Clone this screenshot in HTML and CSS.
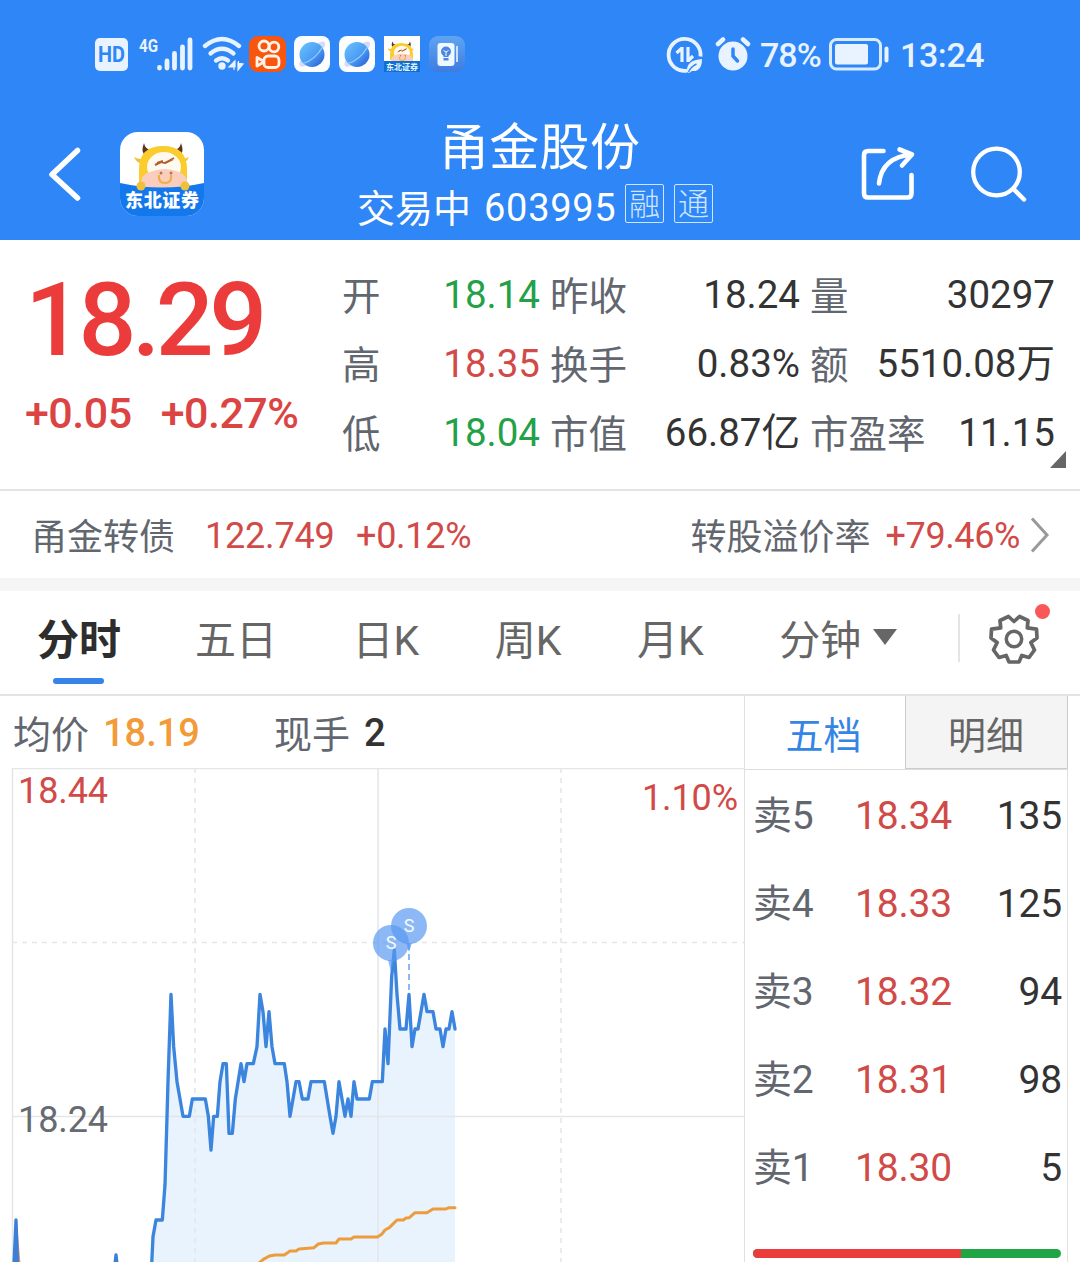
FILE: index.html
```html
<!DOCTYPE html>
<html lang="zh-CN">
<head>
<meta charset="utf-8">
<title>甬金股份 603995</title>
<link rel="stylesheet" href="styles.css">
</head>
<body>
<svg class="defs" width="0" height="0">
  <defs>
    <linearGradient id="planet" x1="0" y1="0" x2="1" y2="1"><stop offset="0" stop-color="#6fc3fb"/><stop offset=".55" stop-color="#4a9df5"/><stop offset="1" stop-color="#2453d0"/></linearGradient>
    <linearGradient id="tile" x1="0" y1="0" x2="0" y2="1"><stop offset="0" stop-color="#5fa4f3"/><stop offset="1" stop-color="#3f7be0"/></linearGradient>
    <symbol id="browser" viewBox="0 0 36 36">
      <rect width="36" height="36" rx="8" fill="#fbfdff"/>
      <path d="M24 7q6-3 7 0t-4 8zM8 22q-4 6-2 8t9-2z" fill="#d5daf6"/>
      <circle cx="18" cy="18.500" r="12.500" fill="url(#planet)"/>
      <path d="M9 27.500Q21 24 28.500 11" fill="none" stroke="#9bcbf8" stroke-width="1.300"/>
    </symbol>
    <symbol id="bull" viewBox="0 0 84 62">
      <path d="M14 25q7 4 13 0l-3 7q-7 0-10-7zM69 25q-7 4-13 0l3 7q7 0 10-7z" fill="#f3bd35"/>
      <path d="M24 11q-3 8 0 11l7-4q-6-1-7-7zM61 11q3 8 0 11l-7-4q6-1 7-7z" fill="#5b3426"/>
      <path d="M19 50V36Q20 14 43 14T67 36v14z" fill="#fccb2c"/>
      <ellipse cx="44" cy="35" rx="17" ry="15" fill="#fffaf0"/>
      <path d="M35 33l6-3 4 1 9-5M37 31l6-2M45 31l8-4" fill="none" stroke="#b35e2e" stroke-width="2"/>
      <path d="M22 53q-3-10 8-13 14-6 29 0 10 4 8 13l-8 3H30z" fill="#fbcdbd"/>
      <path d="M39 43q-1 8 6 8t6-8" fill="none" stroke="#efb044" stroke-width="2.200"/>
      <circle cx="41" cy="41" r="1.500" fill="#b9755b"/><circle cx="51" cy="41" r="1.500" fill="#b9755b"/>
    </symbol>
  </defs>
</svg>

<header class="top">
  <div class="status">
    <div class="status-left">
      <svg class="hd" width="33" height="33" viewBox="0 0 33 33"><rect width="33" height="33" rx="5" fill="#e9f3ff"/><text x="16.500" y="24" text-anchor="middle" textLength="27" lengthAdjust="spacingAndGlyphs" class="hd-text">HD</text></svg>
      <svg class="signal" width="58" height="40" viewBox="-2 -4 58 40"><text x="0" y="15.500" class="net-text" textLength="19" lengthAdjust="spacingAndGlyphs">4G</text><path d="M20.500 31.500v.5M28 25v7M35.500 17.500V32M43.500 11v21M51 4v28" stroke="#e9f3ff" stroke-width="4.800" stroke-linecap="round"/></svg>
      <svg class="wifi" width="42" height="36" viewBox="0 0 42 36"><g fill="none" stroke="#e9f3ff" stroke-width="4.300" stroke-linecap="round"><path d="M3 10Q20-4 37 10"/><path d="M8.500 17.500Q20 8 31.500 17.500"/><path d="M14 24.500q6-4.500 12 0"/></g><circle cx="20" cy="30" r="3.700" fill="#e9f3ff"/><path d="M32 25v9M27 31h6v-6zM36.500 34v-9M36 34v-7l5 1z" fill="#e9f3ff" stroke="#e9f3ff" stroke-width="1.200"/></svg>
      <svg class="app-a" width="37" height="36" viewBox="0 0 37 36"><rect width="37" height="36" rx="9" fill="#f8560f"/><g fill="none" stroke="#fff3e8" stroke-width="2.800"><circle cx="15" cy="10" r="5"/><circle cx="25" cy="11" r="4.800"/><rect x="15" y="20" width="15" height="11.500" rx="4"/><path d="M14 25l-6-3.500v8.500l6-3.500z" stroke-linejoin="round"/></g></svg>
      <svg class="app-b" width="36" height="36"><use href="#browser"/></svg>
      <svg class="app-b" width="36" height="36"><use href="#browser"/></svg>
      <svg class="app-b" width="36" height="36" viewBox="0 0 36 36"><path d="M0 0h36v36H0z" fill="#fdfefe"/><use href="#bull" x="-3" y="0" width="40" height="30"/><path d="M0 25h36v11H0z" fill="#0d70d3"/><text x="2" y="34" class="mini-text" textLength="32">东北证券</text></svg>
      <svg class="app-b" width="36" height="36" viewBox="0 0 36 36"><rect width="36" height="36" rx="9" fill="url(#tile)"/><rect x="8.500" y="7" width="17" height="23" rx="3" fill="#eff8ff"/><path d="M28 10v16" stroke="#c5e2ff" stroke-width="2"/><circle cx="17" cy="15.500" r="5" fill="#4b87df"/><path d="M14.500 19h5v5.500h-5z" fill="#4b87df"/><path d="M14.500 14.500l2.500 1.500 2.500-1.500M17 16v4M14 21.500h6" fill="none" stroke="#eff8ff"/></svg>
    </div>
    <div class="status-right">
      <svg width="38" height="38" viewBox="0 0 38 38"><g fill="none" stroke="#e9f3ff"><path d="M21 34.700A16 16 0 1 1 34.500 20.500" stroke-width="3.800"/><path d="M16 11v15M10.500 17l5.500-5M22 11v15M22 25l5-5" stroke-width="3.200"/></g><path d="M21 36q-1-12 15-13 0 13-10 12l-3 2z" fill="#e9f3ff"/><path d="M22.500 36q2-5 8-8" stroke="#2f86f6" stroke-width="1.400" fill="none"/></svg>
      <svg class="alarm" width="36" height="36" viewBox="0 0 36 36"><circle cx="18" cy="20" r="14.500" fill="#e9f3ff"/><path d="M3 8l5-4.500M33 8l-5-4.500" stroke="#e9f3ff" stroke-width="4.500" stroke-linecap="round"/><path d="M18 13v7l4.500 5" fill="none" stroke="#2f86f6" stroke-width="3.500" stroke-linecap="round"/></svg>
      <span class="battery-text">78%</span>
      <svg class="battery" width="60" height="33" viewBox="0 0 60 33"><rect x="1.500" y="1.500" width="50" height="29.500" rx="6" fill="none" stroke="#d8ebff" stroke-width="3"/><rect x="6" y="6" width="33" height="20.500" rx="2" fill="#e9f3ff"/><rect x="55.500" y="8.500" width="4" height="16" rx="2" fill="#e9f3ff"/></svg>
      <span class="clock">13:24</span>
    </div>
  </div>
  <div class="nav">
    <svg class="back" width="34" height="56" viewBox="0 0 34 56"><path d="M29.500 4.500L4 28.500l25.500 23.500" fill="none" stroke="#fff" stroke-width="5.500" stroke-linecap="round" stroke-linejoin="round"/></svg>
    <svg class="broker" width="84" height="84" viewBox="0 0 84 84"><clipPath id="round"><rect width="84" height="84" rx="18"/></clipPath><g clip-path="url(#round)"><path d="M0 0h84v84H0z" fill="#fff"/><use href="#bull" width="84" height="62"/><path d="M0 51q42 9 84 0v33H0z" fill="#1478ed"/><circle cx="21" cy="54" r="4.500" fill="#eec03b"/><circle cx="65" cy="54" r="4.500" fill="#eec03b"/><text x="5" y="75" class="broker-text" textLength="74">东北证券</text></g></svg>
    <div class="title">
      <h1>甬金股份</h1>
      <div class="subtitle"><span class="state">交易中</span><span class="code">603995</span><span class="tag">融</span><span class="tag">通</span></div>
    </div>
    <svg class="share" width="56" height="56" viewBox="0 0 56 56"><path d="M23.500 5H8Q4 5 4 9v38.500q0 4 4 4h39.500q4 0 4-4V29" fill="none" stroke="#fff" stroke-width="4.600" stroke-linecap="round"/><path d="M19 37.500Q22 11 52 8.500M39.500 3.500l12.500 5-10 11" fill="none" stroke="#fff" stroke-width="4.600" stroke-linecap="round" stroke-linejoin="round"/></svg>
    <svg class="search" width="58" height="56" viewBox="0 0 58 56"><circle cx="26.500" cy="26" r="23.300" fill="none" stroke="#fff" stroke-width="4.300"/><path d="M43.500 43l10.500 10.500" stroke="#fff" stroke-width="4.500" stroke-linecap="round"/></svg>
  </div>
</header>

<section class="quote">
  <div class="price">
    <div class="last">18.29</div>
    <div class="change"><span>+0.05</span><span>+0.27%</span></div>
  </div>
  <dl class="stats">
    <div><dt>开</dt><dd class="green">18.14</dd></div><div><dt>昨收</dt><dd>18.24</dd></div><div><dt>量</dt><dd>30297</dd></div>
    <div><dt>高</dt><dd class="red">18.35</dd></div><div><dt>换手</dt><dd>0.83%</dd></div><div><dt>额</dt><dd>5510.08万</dd></div>
    <div><dt>低</dt><dd class="green">18.04</dd></div><div><dt>市值</dt><dd>66.87亿</dd></div><div><dt>市盈率</dt><dd>11.15</dd></div>
  </dl>
  <svg class="expand" width="16" height="17"><path d="M16 0v17H0z" fill="#666"/></svg>
</section>

<section class="bond">
  <span class="bond-name">甬金转债</span><span class="bond-price">122.749</span><span class="bond-pct">+0.12%</span>
  <span class="premium">转股溢价率</span><span class="premium-pct">+79.46%</span>
  <svg class="chevron" width="20" height="36" viewBox="0 0 20 36"><path d="M2 1.500l15 16.500L2 34.500" fill="none" stroke="#999" stroke-width="3"/></svg>
</section>

<nav class="tabs">
  <span class="tab active">分时</span><span class="tab">五日</span><span class="tab">日K</span><span class="tab">周K</span><span class="tab">月K</span><span class="tab minute">分钟<svg width="24" height="16"><path d="M0 0h24L12 16z" fill="#666"/></svg></span>
  <div class="settings">
    <svg width="52" height="52" viewBox="-26 -26 52 52"><path fill="none" stroke="#666" stroke-width="3.700" stroke-linejoin="round" d="M-5.500-22.500L0-17.500 5.500-22.500 14-18.500 13.300-11.200 22.500-9.800 23-1 16.800 3.500 20.500 11 15 18.500 7.800 16.500 5 23H-5L-7.800 16.500-15 18.500-20.500 11-16.800 3.500-23-1-22.500-9.800-13.300-11.200-14-18.500z"/><circle r="7.700" fill="none" stroke="#666" stroke-width="3.500"/></svg>
    <i class="dot"></i>
  </div>
</nav>

<main class="market">
  <section class="chart">
    <div class="legend"><span class="label">均价</span><b class="avg">18.19</b><span class="label hand">现手</span><b>2</b></div>
    <svg class="plot" width="744" height="494" viewBox="0 768 744 494">
      <path d="M151.500 1262L153 1237 156 1220H162L165 1185 168 1082 171 994 177 1082 183 1116H189L192 1099H205L211 1150 214 1116H217L223 1064H226L229 1133H232L241 1064H254L260 994 275 1064H284L290 1116 296 1082 302 1099 311 1082H324L333 1133 339 1082 345 1116 354 1082 357 1099H369L372 1082H382L385 1029 388 1064 394 945 400 1029H406L409 994 412 1047 424 994 433 1012 443 1047 452 1012 455 1029V1262z" fill="#e8f3fe"/>
      <g fill="none" stroke="#e3e5e8" stroke-width="1.500">
        <path d="M12.500 1262V768.500H744M378 768v494M12 1116.500H744"/>
        <path d="M195 768v494M561 768v494M12 942.500H744" stroke-dasharray="5 5"/>
      </g>
      <g fill="none" stroke-linejoin="round" stroke-linecap="round">
        <path d="M16 1228l3 36" stroke="#dd9470" stroke-width="3"/>
        <path d="M14 1264l2-44 1.500 44M115 1264l1-9 1 9" stroke="#3d7fd6" stroke-width="3.300"/>
        <path transform="translate(130 890) scale(.33333)" stroke="#3b85de" stroke-width="10" d="M65 1125L69 1040 78 990 97 990 105 885 111 680 114 575 123 313 131 470 141 575 150 627 159 679 178 679 187 627 226 627 235 679 243 780 251 679 262 679 270 575 279 521 289 521 297 730 307 730 316 627 333 521 342 575 351 521 370 521 381 470 390 313 399 365 408 470 417 365 426 470 435 521 463 521 471 575 480 679 498 575 507 575 517 627 534 627 543 575 583 575 600 679 609 730 618 679 627 575 645 679 654 627 663 679 672 575 681 627 718 627 727 575 757 575 765 417 774 521 785 260 793 180 801 313 810 417 828 417 837 313 846 470 855 417 864 417 873 365 882 313 891 365 909 365 918 417 930 417 939 470 948 417 957 417 966 365 975 417"/>
        <path transform="translate(130 890) scale(.33333)" stroke="#ed9c3c" stroke-width="9" d="M380 1125L400 1108 418 1098 435 1095 463 1095 480 1083 498 1083 507 1077 552 1073 565 1062 580 1059 618 1059 627 1047 663 1047 672 1041 742 1041 755 1033 765 1020 778 1013 790 1001 801 990 820 990 828 984 838 983 855 968 891 968 909 957 948 957 957 953 975 953"/>
      </g>
      <path d="M409 944v48" stroke="#8db9f2" stroke-width="2" stroke-dasharray="6 4"/>
      <g fill="#5698f1" fill-opacity=".68"><path d="M406 943h6l-3 9zM388 960h6l-3 12z"/><circle cx="409" cy="926" r="18"/><circle cx="391" cy="943" r="18"/></g>
      <g class="marker"><text x="409" y="932">S</text><text x="391" y="949">S</text></g>
      <g class="axis"><text x="18" y="803" class="up" textLength="90">18.44</text><text x="642" y="810" class="up" textLength="96">1.10%</text><text x="18" y="1132" textLength="90">18.24</text></g>
    </svg>
  </section>
  <aside class="book">
    <div class="book-tabs"><span class="on">五档</span><span class="off">明细</span></div>
    <div class="row"><span>卖5</span><span class="red">18.34</span><span class="vol">135</span></div>
    <div class="row"><span>卖4</span><span class="red">18.33</span><span class="vol">125</span></div>
    <div class="row"><span>卖3</span><span class="red">18.32</span><span class="vol">94</span></div>
    <div class="row"><span>卖2</span><span class="red">18.31</span><span class="vol">98</span></div>
    <div class="row"><span>卖1</span><span class="red">18.30</span><span class="vol">5</span></div>
    <div class="ratio"><i></i></div>
  </aside>
</main>
</body>
</html>
```
FILE: styles.css
```css
* { box-sizing: border-box; }
body { margin: 0; width: 1080px; height: 1262px; overflow: hidden; background: #fff; color: #333; font-family: Roboto, "Noto Sans CJK SC", sans-serif; }
svg { display: block; flex: none; }
.defs { position: absolute; }
span, dt, dd, b { white-space: nowrap; }
.red { color: #d14a48; }
.green { color: #24a148; }

.top { height: 240px; background: #2f86f6; color: #fff; }
.status { height: 110px; display: flex; justify-content: space-between; padding: 0 95px 0 95px; color: #e9f3ff; }
.status-left { display: flex; align-items: flex-start; padding-top: 36px; }
.status-right { display: flex; align-items: center; height: 110px; font-size: 34px; font-weight: 500; }
.hd { margin-top: 2px; }
.hd-text { font: 700 22px Roboto; fill: #2f86f6; }
.net-text { font: 700 18px Roboto; fill: #e9f3ff; }
.signal { margin: -4px 0 0 9px; }
.wifi { margin-left: 7px; }
.app-a { margin-left: 5px; }
.app-b { margin-left: 9px; }
.app-a + .app-b { margin-left: 8px; }
.mini-text { font: 700 8px "Noto Sans CJK SC", sans-serif; fill: #e9f5ff; }
.alarm { margin: -3px 0 0 11px; }
.battery-text { width: 62px; margin-left: 9px; letter-spacing: -1px; }
.battery { margin: -1px 0 0 7px; }
.clock { width: 85px; margin-left: 11px; letter-spacing: -.4px; }

.nav { height: 130px; display: flex; align-items: flex-start; }
.back { margin: 36px 0 0 48px; }
.broker { margin: 22px 0 0 38px; }
.broker-text { font: 900 18px "Noto Sans CJK SC", sans-serif; fill: #fff; }
.title { width: 400px; margin-left: 136px; padding-top: 8px; }
h1 { margin: 0 0 0 99px; font-size: 50px; line-height: 60px; font-weight: 400; letter-spacing: .3px; }
.subtitle { display: flex; align-items: center; margin-left: 17px; height: 60px; font-size: 38px; line-height: 62px; }
.state { padding-top: 1px; }
.code { margin-left: 13px; width: 132px; letter-spacing: .7px; }
.tag { width: 39px; height: 39px; margin: -10px 0 0 9px; border: 1.500px solid #cfe6ff; border-radius: 2px; font-size: 31px; line-height: 39px; text-align: center; color: #cfe6ff; font-weight: 300; }
.tag + .tag { margin-left: 10px; }
.share { margin: 36px 0 0 120px; }
.search { margin: 36px 0 0 54px; }

.quote { position: relative; height: 251px; display: flex; border-bottom: 2px solid #e4e4e4; }
.price { width: 342px; padding-left: 25px; }
.last { height: 120px; margin: 20px 0 0; line-height: 120px; font-size: 102px; font-weight: 500; color: #eb3b3b; letter-spacing: -4.500px; }
.change { display: flex; gap: 29px; line-height: 66px; font-size: 43px; font-weight: 500; color: #dc4443; letter-spacing: -.5px; }
.stats { margin: 20px 0 0; width: 714px; height: 207px; display: grid; grid-template-columns: 198px 250px 245px; grid-auto-rows: 69px; column-gap: 10px; font-size: 38.500px; line-height: 69px; }
.stats div { display: flex; justify-content: space-between; }
dt { padding-top: 2px; color: #62666f; }
dd { margin: 0; }
.expand { position: absolute; left: 1050px; top: 211px; }

.bond { height: 100px; display: flex; align-items: center; padding: 3px 30px 0 31px; border-bottom: 13px solid #f5f5f5; font-size: 36px; line-height: 87px; color: #d14a48; }
.bond-name, .premium { padding-top: 4px; color: #62666f; }
.bond-price { margin-left: 30px; width: 128px; letter-spacing: -.2px; }
.bond-pct { margin-left: 23px; letter-spacing: -.3px; }
.premium { margin-left: auto; }
.premium-pct { margin-left: 15px; letter-spacing: -.4px; }
.chevron { margin: -3px 0 0 10px; }

.tabs { height: 105px; display: flex; align-items: flex-start; padding-left: 37px; border-bottom: 2px solid #e4e4e4; font-size: 41px; line-height: 100px; color: #666; }
.tab { margin-right: 75.500px; }
.active { display: flex; flex-direction: column; align-items: center; margin-right: 74px; font-size: 42px; font-weight: 700; color: #2d2d2d; }
.active::after { content: ""; width: 51px; height: 6px; margin: -13px 2px 0 0; border-radius: 3px; background: #3783ea; }
.minute { display: flex; align-items: center; gap: 12px; margin-right: 0; }
.minute svg { margin-top: -8px; }
.settings { position: relative; margin: 23px 40px 0 auto; height: 48px; padding-left: 28px; border-left: 2px solid #e4e4e4; }
.settings svg { margin-top: -1px; }
.dot { position: absolute; right: -10px; top: -10px; width: 15px; height: 15px; border-radius: 50%; background: #fa5858; }

.market { display: flex; height: 566px; }
.chart { width: 744px; }
.legend { display: flex; height: 72px; padding-left: 13px; font-size: 38px; line-height: 74px; }
.legend b { margin-left: 14px; font-weight: 500; }
.legend .avg { color: #f29b38; }
.label { padding-top: 2px; color: #62666f; }
.hand { margin-left: 74px; }
.axis { font-size: 36px; fill: #666a72; }
.axis .up { fill: #d14a48; }
.marker { font-size: 18px; fill: #f4f9ff; text-anchor: middle; }

.book { width: 324px; border: solid #e0e0e0; border-width: 0 1px 0 1px; }
.book-tabs { display: flex; height: 74px; margin-right: -1px; border-bottom: 1px solid #ddd; font-size: 38px; line-height: 81px; text-align: center; }
.on { width: 160px; padding-right: 3px; color: #3585e5; }
.off { flex: 1; padding-right: 1px; background: #f4f4f4; border: solid #ccc; border-width: 0 1px 1px 1px; color: #666; }
.row { height: 88px; padding: 0 5px 0 8px; display: grid; grid-template-columns: 102px 110px 1fr; line-height: 92px; font-size: 39px; letter-spacing: -.2px; color: #62666f; }
.row .red { color: #d14a48; }
.row .vol { color: #333; text-align: right; }
.ratio { height: 9px; margin: 39px 6px 0 8px; border-radius: 5px; overflow: hidden; background: #20a546; }
.ratio i { display: block; width: 208px; height: 9px; background: #eb3b3b; }
```
